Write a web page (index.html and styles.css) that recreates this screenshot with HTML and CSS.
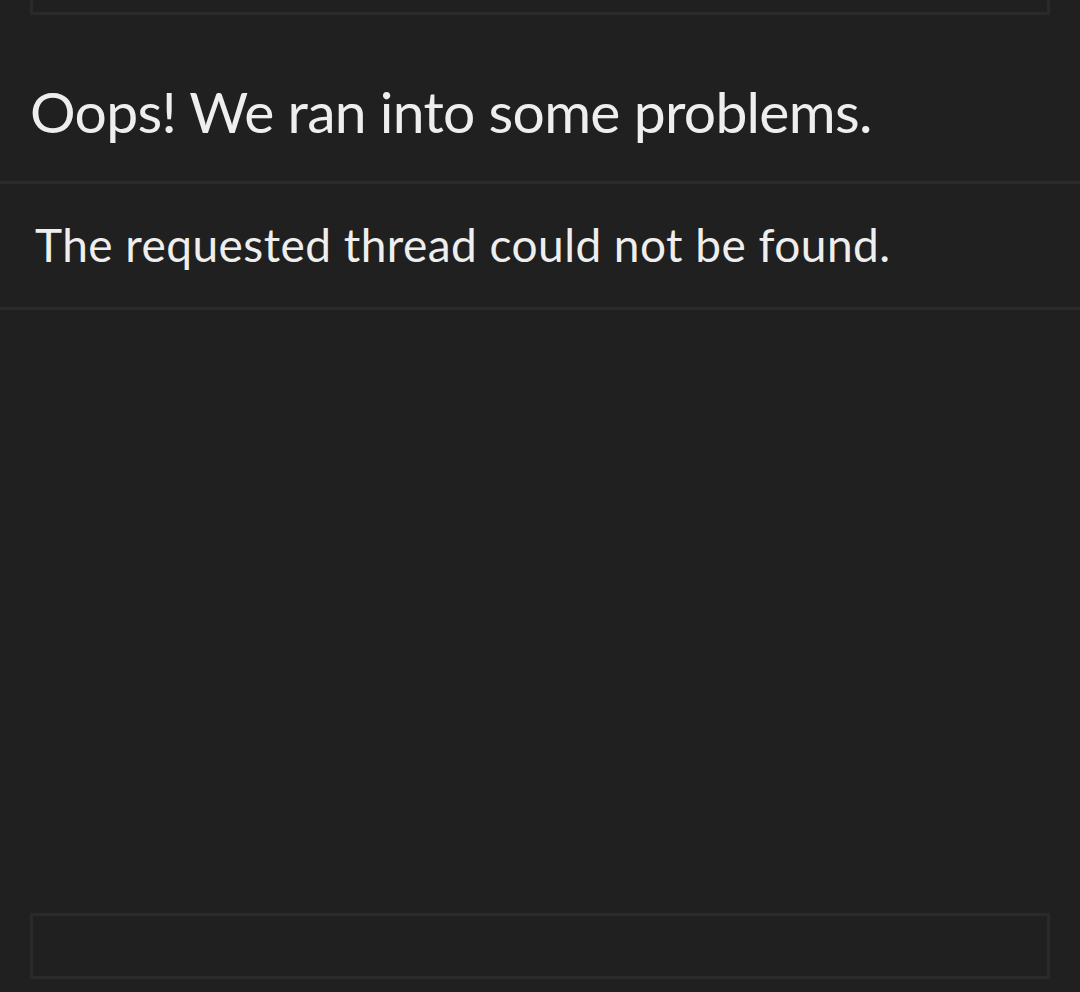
FILE: index.html
```html
<!DOCTYPE html>
<html lang="en">
<head>
<meta charset="utf-8">
<title>Error</title>
<link rel="stylesheet" href="styles.css">
</head>
<body>
<div class="page">
  <div class="top-box"></div>
  <header class="error-header">
    <h1 class="error-title">Oops! We ran into some problems.</h1>
  </header>
  <section class="error-message">
    <p class="error-text">The requested thread could not be found.</p>
  </section>
  <div class="spacer"></div>
  <div class="bottom-box"></div>
</div>
</body>
</html>
```
FILE: styles.css
```css
html, body {
  margin: 0;
  padding: 0;
  background: #202020;
  overflow: hidden;
}

.page {
  height: 992px;
  display: flex;
  flex-direction: column;
  font-family: Lato, "Noto Sans", sans-serif;
  color: #eeeeee;
}

.top-box {
  margin: -40px 30px 0;
  height: 55px;
  box-sizing: border-box;
  border: 3px solid #2a2a2a;
  flex: none;
}

.error-header {
  padding: 62px 30px 36px 30px;
  border-bottom: 3px solid #2a2a2a;
  flex: none;
}

.error-title {
  margin: 0;
  font-size: 57px;
  font-weight: 400;
  line-height: 1.2;
  letter-spacing: -0.7px;
}

.error-message {
  padding: 33px 34px 34px 35px;
  border-bottom: 3px solid #2a2a2a;
  flex: none;
}

.error-text {
  margin: 0;
  font-size: 46px;
  font-weight: 400;
  line-height: 1.2;
  letter-spacing: 0.45px;
}

.spacer {
  flex: 1;
}

.bottom-box {
  margin: 0 30px 13px;
  height: 66px;
  box-sizing: border-box;
  border: 3px solid #2a2a2a;
  flex: none;
}
```
